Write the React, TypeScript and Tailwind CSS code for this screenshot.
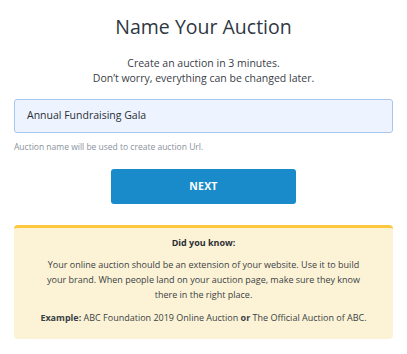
import React from "react";

export default function App() {
  return (
    <div
      className="w-[407px] h-[354px] bg-white flex flex-col items-center px-[14px] text-[#333b44]"
      style={{ fontFamily: '"Open Sans", sans-serif' }}
    >
      <h1 className="mt-[13px] text-[19.5px] leading-[28px] text-[#2f3741]">Name Your Auction</h1>
      <p className="mt-[15px] text-[10.5px] leading-[15px] text-center text-[#3a4048]">
        Create an auction in 3 minutes.
        <br />
        Don’t worry, everything can be changed later.
      </p>
      <div className="mt-[13px] w-full h-[34px] rounded-[3px] border border-[#a8c6ec] bg-[#edf4ff] flex items-center px-[12px] text-[10.5px] text-[#2b2f35]">
        Annual Fundraising Gala
      </div>
      <p className="self-start mt-[8px] text-[8.5px] leading-[12px] text-[#8a929b]">
        Auction name will be used to create auction Url.
      </p>
      <button className="mt-[16px] w-[185px] h-[35px] rounded-[3px] bg-[#1a8bca] text-white text-[10.5px] font-bold tracking-[0.2px]">
        NEXT
      </button>
      <div className="mt-[21px] w-full h-[114px] rounded-[4px] border-t-[3px] border-[#fdc83d] bg-[#fcf3d6] flex flex-col items-center px-[18px] text-center text-[9px] leading-[15px] text-[#3a3f45]">
        <p className="mt-[7px] font-bold text-[#2b2f35]">Did you know:</p>
        <p className="mt-[7px] px-[12px]">
          Your online auction should be an extension of your website. Use it to build your brand. When people land on your auction page, make sure they know there in the right place.
        </p>
        <p className="mt-[8px] whitespace-nowrap">
          <span className="font-bold">Example:</span> ABC Foundation 2019 Online Auction <span className="font-bold">or</span> The Official Auction of ABC.
        </p>
      </div>
    </div>
  );
}
